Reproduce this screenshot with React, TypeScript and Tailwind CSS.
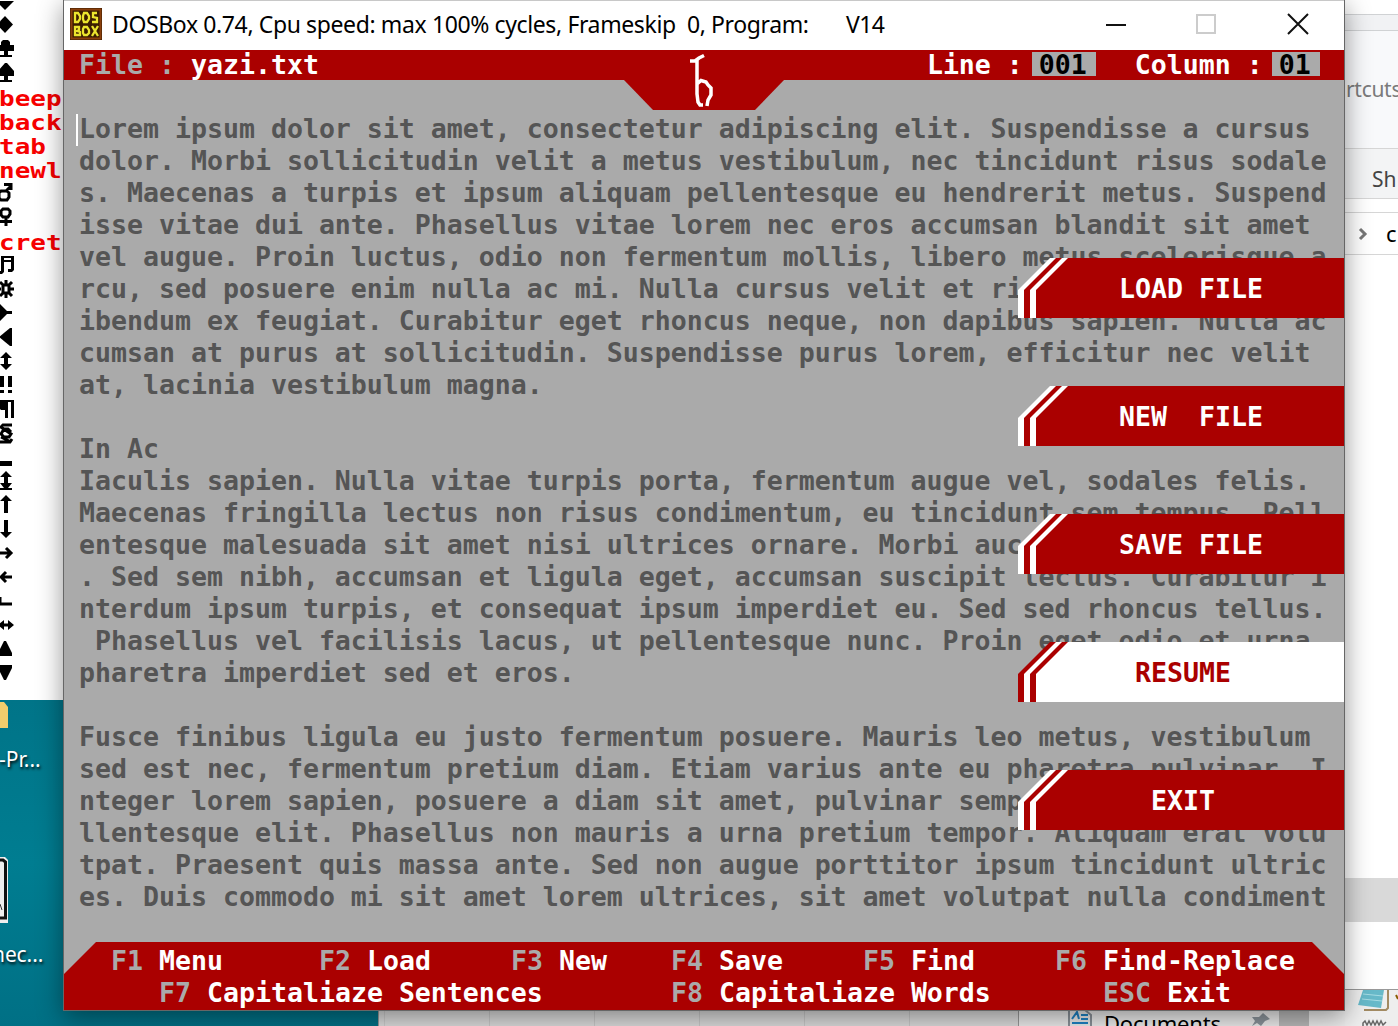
import React from "react";

const MONO = "font-['DejaVu_Sans_Mono',monospace] font-bold";

const body = [
  "Lorem ipsum dolor sit amet, consectetur adipiscing elit. Suspendisse a cursus",
  "dolor. Morbi sollicitudin velit a metus vestibulum, nec tincidunt risus sodale",
  "s. Maecenas a turpis et ipsum aliquam pellentesque eu hendrerit metus. Suspend",
  "isse vitae dui ante. Phasellus vitae lorem nec eros accumsan blandit sit amet",
  "vel augue. Proin luctus, odio non fermentum mollis, libero metus scelerisque a",
  "rcu, sed posuere enim nulla ac mi. Nulla cursus velit et ri",
  "ibendum ex feugiat. Curabitur eget rhoncus neque, non dapibus sapien. Nulla ac",
  "cumsan at purus at sollicitudin. Suspendisse purus lorem, efficitur nec velit",
  "at, lacinia vestibulum magna.",
  "",
  "In Ac",
  "Iaculis sapien. Nulla vitae turpis porta, fermentum augue vel, sodales felis.",
  "Maecenas fringilla lectus non risus condimentum, eu tincidunt sem tempus. Pell",
  "entesque malesuada sit amet nisi ultrices ornare. Morbi auc",
  ". Sed sem nibh, accumsan et ligula eget, accumsan suscipit lectus. Curabitur i",
  "nterdum ipsum turpis, et consequat ipsum imperdiet eu. Sed sed rhoncus tellus.",
  " Phasellus vel facilisis lacus, ut pellentesque nunc. Proin eget odio et urna",
  "pharetra imperdiet sed et eros.",
  "",
  "Fusce finibus ligula eu justo fermentum posuere. Mauris leo metus, vestibulum",
  "sed est nec, fermentum pretium diam. Etiam varius ante eu pharetra pulvinar. I",
  "nteger lorem sapien, posuere a diam sit amet, pulvinar semp",
  "llentesque elit. Phasellus non mauris a urna pretium tempor. Aliquam erat volu",
  "tpat. Praesent quis massa ante. Sed non augue porttitor ipsum tincidunt ultric",
  "es. Duis commodo mi sit amet lorem ultrices, sit amet volutpat nulla condiment",
];

const menu = [
  { label: "LOAD FILE", indent: "pl-[101px]", active: false },
  { label: "NEW  FILE", indent: "pl-[101px]", active: false },
  { label: "SAVE FILE", indent: "pl-[101px]", active: false },
  { label: "RESUME", indent: "pl-[117px]", active: true },
  { label: "EXIT", indent: "pl-[133px]", active: false },
];

type Glyph = { word?: string; d?: string; s?: string };

/* Rows of the character table: red words, filled shapes (d) and stroked shapes (s). */
const glyphs: Glyph[] = [
  { d: "M-4 11 H14 L5 20 Z" },
  { d: "M5 2 L13 10.500 L5 19 L-3 10.500 Z" },
  { d: "M3 2 H8 L10 4 V7 H14 V13 H8 V17 H12 V19 H0 V17 H4 V13 H-2 V7 H1 V4 Z" },
  { d: "M5 1 H7 L14 9 V14 H8 V18 H12 V20 H0 V18 H4 V14 H-2 V9 Z" },
  { word: "beep" },
  { word: "back" },
  { word: "tab" },
  { word: "newl" },
  { s: "M1 9 H7 L9 11 V15 L7 18 H1 L-1 16 V11 Z M6 9 L10 5 M4 2.500 H11 V8" },
  { s: "M3 3 H8 L10 5 V8 L8 11 H3 L1 9 V5 Z M6 11 V20 M0 15.500 H12" },
  { word: "cret" },
  { d: "M1 2 H14 V16 L12 18 H8 V15 H11 V8 H4 V18 L2 20 H-2 V17 H1 Z M4 4 V6 H11 V4 Z" },
  { s: "M6 2 V6 M6 16 V20 M-2 11 H1 M10 11 H14 M3 7 H9 V15 H3 Z M0 4 L3 7 M12 4 L9 7 M0 18 L3 15 M12 18 L9 15" },
  { d: "M-2 2 L0 2 L7 9 H12 V12 H7 L0 19 H-2 Z" },
  { d: "M12 2 V20 L10 20 L-1 11 L10 2 Z" },
  { d: "M6 2 L12 8 H8 V14 H12 L6 20 L0 14 H4 V8 H0 Z" },
  { d: "M0 2h4v11h-4z M8 2h4v11h-4z M0 16h4v3h-4z M8 16h4v3h-4z" },
  { d: "M-1 2 H14 V20 H11 V4 H8 V20 H5 V12 H1 L-1 10 Z" },
  { s: "M12 3 H3 L1 5 L11 12 L9 15 H4 L1 12 L4 7 H8 L11 10 M1 15 L9 19 M12 17 L10 20 H0" },
  { d: "M-2 15 H12 V20 H-2 Z" },
  { d: "M6 1 L12 7 H8 V13 H12 L8 18 H12 V20 H0 V18 H4 L0 13 H4 V7 H0 Z" },
  { d: "M6 1 L12 7 H8 V19 H4 V7 H0 Z" },
  { d: "M6 20 L12 14 H8 V2 H4 V14 H0 Z" },
  { s: "M-2 11 H11 M6 6 L11 11 L6 16" },
  { s: "M12 11 H1 M6 6 L1 11 L6 16" },
  { s: "M0 7 V14 H12" },
  { d: "M-2 11 L4 6 V9.500 H8 V6 L14 11 L8 16 V12.500 H4 V16 Z" },
  { d: "M4 3 H6 L12 15 V18 H-2 V15 Z" },
  { d: "M-2 3 H12 V6 L6 18 H4 L-2 6 Z" },
];

function CharTable() {
  return (
    <div className="flex h-[700px] w-[63px] flex-col overflow-hidden bg-white">
      <div className="-mt-[10px] flex flex-col">
        {glyphs.map((g, i) =>
          g.word ? (
            <div
              key={i}
              className={`${MONO} -ml-px h-6 origin-left scale-x-[1.18] whitespace-pre pt-px text-[22px] leading-6 text-[#f70000]`}
            >
              {g.word}
            </div>
          ) : (
            <svg key={i} width="16" height="24" viewBox="0 0 16 24" className="block shrink-0">
              {g.d && <path d={g.d} fill="#000" fillRule="evenodd" />}
              {g.s && <path d={g.s} fill="none" stroke="#000" strokeWidth="3" />}
            </svg>
          )
        )}
      </div>
    </div>
  );
}

function Desktop() {
  return (
    <div className="flex h-[326px] w-[378px] shrink-0 flex-col overflow-hidden bg-gradient-to-b from-[#007488] via-[#007d91] to-[#007085] font-['Noto_Sans',sans-serif] text-[21px] text-white">
      <svg width="8" height="28" className="block shrink-0">
        <path d="M0 2 H4 L8 7 V28 H0 Z" fill="#f2cd6c" />
      </svg>
      <div className="mt-[15px] -ml-px h-8 leading-8 [text-shadow:1px_2px_3px_#000]">-Pr...</div>
      <svg width="8" height="68" className="mt-[81px] block shrink-0">
        <path d="M0 1 H5 L8 4 V67 H0 Z" fill="#eee" />
        <path d="M0 4 H3 L5.500 6 V62 H0" fill="none" stroke="#111" strokeWidth="3" />
        <path d="M0 48 L2 54" stroke="#333" />
      </svg>
      <div className="mt-[14px] -ml-[8px] h-8 leading-8 tracking-[-0.1px] [text-shadow:1px_2px_3px_#000]">nec...</div>
    </div>
  );
}

function RightPane() {
  return (
    <div className="flex h-full w-[53px] flex-col overflow-hidden bg-white font-['Noto_Sans',sans-serif] text-[20px]">
      <div className="h-[14px] shrink-0" />
      <div className="h-[17px] shrink-0 border-y border-[#d0d2d4] bg-[#f1f2f4]" />
      <div className="flex h-[118px] shrink-0 items-center border-b border-[#d6d6d6] bg-[#f8f9fb] pl-px text-[#7b7b7b]">
        <span className="text-[21px] tracking-[-0.3px]">rtcuts</span>
      </div>
      <div className="flex h-[50px] shrink-0 items-center border-b border-[#d6d6d6] bg-[#f3f4f5] pt-[12px] pl-[27px] text-[21px] text-[#444]">Sh</div>
      <div className="h-[13px] shrink-0" />
      <div className="flex h-[43px] shrink-0 items-center border-y border-[#d6d6d6] text-black">
        <svg width="12" height="14" className="ml-3 mr-[17px] shrink-0">
          <path d="M3 2 L8 7 L3 12" fill="none" stroke="#777" strokeWidth="3" />
        </svg>
        <span className="text-[22px]">c</span>
      </div>
      <div className="h-[623px] shrink-0" />
      <div className="h-[44px] shrink-0 bg-[#d9d9d9]" />
      <div className="h-[68px] shrink-0 border-b border-[#999]" />
      <div className="flex-1 bg-[#eee]">
        <svg width="53" height="36" className="block">
          <path d="M19 20 H41 L43 18 V0" fill="none" stroke="#a28a62" strokeWidth="2" />
          <path d="M18 0 H39 L36 18 L13 15 Z" fill="#67b9c9" />
          <path d="M18 4 L38 6 M17 9 L37 11" stroke="#a6dce4" />
          <path d="M51 5 L53 9" stroke="#8a5a00" strokeWidth="2" />
          <path d="M18 36 V33 L20 31 L22 35 L24 31 L26 35 L28 31 L30 35 L32 31 L34 35 L36 31 L38 35 L41 32" fill="none" stroke="#666" strokeWidth="1.500" />
        </svg>
      </div>
    </div>
  );
}

function BottomPane() {
  return (
    <div className="flex h-4 w-[967px] shrink-0 overflow-hidden bg-[#dcdcdc] font-['Noto_Sans',sans-serif] text-[20px]">
      <div className="flex h-full w-[641px] shrink-0 border-x border-[#999]">
        <div className="w-1.5 border-r border-[#ccc]" />
        <div className="w-[105px] border-r border-[#c9c9c9]" />
        <div className="w-[105px] border-r border-[#c9c9c9]" />
        <div className="w-[105px] border-r border-[#c9c9c9]" />
        <div className="w-[105px] border-r border-[#c9c9c9]" />
        <div className="w-[105px] border-r border-[#c9c9c9]" />
      </div>
      <div className="flex h-[30px] flex-1 bg-[#ececec]">
        <svg width="24" height="16" className="ml-[49px] shrink-0">
          <path d="M1 0 V16 M23 16 V5 L17 0" fill="none" stroke="#8b9299" strokeWidth="2" />
          <path d="M4 9 L9 2 L11 9 M13 5 H20 M13 9 H20 M4 13 H20" fill="none" stroke="#1f83c5" strokeWidth="2" />
        </svg>
        <span className="ml-[12px] w-[124px] text-[22px] leading-[26px] tracking-[-0.2px] text-black">Documents</span>
        <svg width="20" height="16" className="ml-[23px] shrink-0">
          <path d="M12 3 L19 9 L14 11 L10 16 L6 13 L1 16 L4 11 L1 7 L8 7 Z" fill="#8b949b" />
        </svg>
        <div className="ml-[8px] h-4 w-[30px] bg-[#b9b9b9]" />
      </div>
    </div>
  );
}

function MenuButton({ label, indent, active }: { label: string; indent: string; active: boolean }) {
  const line = active ? "#aa0000" : "#ffffff";
  const fill = active ? "#ffffff" : "#aa0000";
  return (
    <div className={`relative flex h-[60px] w-[326px] items-center ${indent}`}>
      <svg width="326" height="60" className="absolute inset-0">
        <path d="M0 60 V32 L32 0 H326 V60 Z" fill={line} />
        <path d="M6 60 V32 L38 0 H326 V60 Z" fill={fill} />
        <path d="M12 60 V32 L44 0 H326 V60 Z" fill={line} />
        <path d="M18 60 V32 L50 0 H326 V60 Z" fill={fill} />
      </svg>
      <span className={`relative top-px whitespace-pre ${active ? "text-[#aa0000]" : "text-white"}`}>
        {label}
      </span>
    </div>
  );
}

function K({ children }: { children: React.ReactNode }) {
  return <span className="text-[#aaaaaa]">{children}</span>;
}

function TitleBar() {
  return (
    <div className="flex h-[50px] items-center border-t border-[#c8c8c8] bg-white pl-[6px] font-['Noto_Sans',sans-serif] text-[23px] text-black">
      <svg width="32" height="32" viewBox="0 0 32 32" className="-mt-[3px] shrink-0">
        <rect width="32" height="32" fill="#3b1d00" />
        <rect x="1.500" y="1.500" width="29" height="29" fill="none" stroke="#8a3f0c" strokeWidth="2" />
        <g fill="none" stroke="#ece52e" strokeWidth="2.300">
          <path d="M5 5 H8 L10 8 V11 L8 14 H5 Z" />
          <path d="M14 5 H17 L19 8 V11 L17 14 H14 L13 11 V8 Z" />
          <path d="M27 5 H23 V9 L27 10 V14 H22" />
          <path d="M5 19 H9 V22 L7 23 L10 24 V27 H5 Z" />
          <path d="M14 19 H17 L19 22 V25 L17 27 H14 L13 25 V21 Z" />
          <path d="M22 18 L28 28 M28 18 L22 28" />
        </g>
      </svg>
      <span className="-mt-[3px] ml-[10px] w-[700px] shrink-0 whitespace-pre tracking-[-0.38px]">
        DOSBox 0.74, Cpu speed: max 100% cycles, Frameskip  0, Program:
      </span>
      <span className="-mt-[3px] ml-[34px] tracking-[-0.6px]">V14</span>
      <svg width="204" height="24" viewBox="0 0 204 24" className="-mt-[3px] mr-[35px] ml-auto shrink-0">
        <path d="M1 13 H21" stroke="#111" strokeWidth="2" />
        <rect x="92" y="3" width="18" height="18" fill="none" stroke="#ccc" strokeWidth="2" />
        <path d="M183 2 L203 22 M203 2 L183 22" stroke="#111" strokeWidth="2" />
      </svg>
    </div>
  );
}

export default function App() {
  return (
    <div className="relative h-[1026px] w-[1398px] overflow-hidden bg-white">
      <div className="flex h-full">
        <div className="flex w-[1345px] shrink-0 flex-col">
          <div className="h-[700px]">
            <CharTable />
          </div>
          <div className="flex items-end">
            <Desktop />
            <BottomPane />
          </div>
        </div>
        <RightPane />
      </div>

      <main className="absolute top-0 left-[63px] flex h-[1011px] w-[1282px] flex-col border-x border-b border-[#666] bg-[#aaaaaa] shadow-[0_6px_24px_0_rgba(0,0,0,0.42)]">
        <TitleBar />
        <div className={`${MONO} relative flex h-[960px] flex-col text-[26.576px] leading-8 text-[#555555]`}>
          <header className="relative flex h-[30px] shrink-0 bg-[#aa0000] pl-[15px] text-white">
            <span className="-mt-px whitespace-pre">
              <K>File :</K> yazi.txt
            </span>
            <span className="-mt-px ml-[608px] whitespace-pre">Line :</span>
            <span className="mt-[2px] ml-[9px] h-6 w-16 bg-[#aaaaaa] pl-[7px] leading-[26px] text-black">001</span>
            <span className="-mt-px ml-[39px] whitespace-pre">Column :</span>
            <span className="mt-[2px] ml-[9px] h-6 w-12 bg-[#aaaaaa] pl-[7px] leading-[26px] text-black">01</span>
            <svg width="160" height="60" className="absolute top-0 left-[560px]">
              <path d="M0 29 H160 V30 L131 60 H29 L0 30 Z" fill="#aa0000" />
              <path
                d="M66 11 H71 L75 8 L80 5.500 M73 10 V44 L74 52 L76 55 H79 M73 34 L77 30.500 L82 32 L84 35 L87 38 V45 L84 50 L83 56"
                fill="none"
                stroke="#fff"
                strokeWidth="3.500"
              />
            </svg>
          </header>

          <div className="relative mt-[33px] flex flex-col pl-[15px]">
            {body.map((line, i) => (
              <div key={i} className="h-8 whitespace-pre">
                {line}
              </div>
            ))}
            <div className="absolute top-px left-3 h-8 w-[2px] bg-white" />
          </div>

          <nav className="absolute top-[208px] right-0 flex flex-col gap-[68px] text-white">
            {menu.map((m) => (
              <MenuButton key={m.label} label={m.label} indent={m.indent} active={m.active} />
            ))}
          </nav>

          <footer className="mt-auto h-[68px] shrink-0 bg-[#aa0000] pt-[3px] text-white [clip-path:polygon(0_32px,32px_0,1248px_0,1280px_32px,100%_100%,0_100%)]">
            <div className="flex h-8 whitespace-pre pl-[47px]">
              <span className="w-[208px]"><K>F1</K> Menu</span>
              <span className="w-[192px]"><K>F2</K> Load</span>
              <span className="w-[160px]"><K>F3</K> New</span>
              <span className="w-[192px]"><K>F4</K> Save</span>
              <span className="w-[192px]"><K>F5</K> Find</span>
              <span><K>F6</K> Find-Replace</span>
            </div>
            <div className="flex h-8 whitespace-pre pl-[95px]">
              <span className="w-[512px]"><K>F7</K> Capitaliaze Sentences</span>
              <span className="w-[432px]"><K>F8</K> Capitaliaze Words</span>
              <span><K>ESC</K> Exit</span>
            </div>
          </footer>
        </div>
      </main>
    </div>
  );
}
